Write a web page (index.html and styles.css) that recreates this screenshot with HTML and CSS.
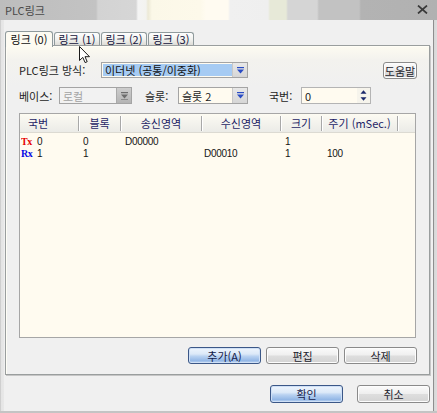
FILE: index.html
```html
<!DOCTYPE html>
<html lang="ko">
<head>
<meta charset="utf-8">
<title>PLC링크</title>
<link rel="stylesheet" href="styles.css">
</head>
<body>
<div class="win">
  <div class="titlebar">
    <span class="title">PLC링크</span>
    <svg class="close" width="11" height="9" viewBox="0 0 11 9"><path d="M1 0.5 L10 8.5 M10 0.5 L1 8.5" stroke="#3a3a3a" stroke-width="1.7" fill="none"/></svg>
  </div>
  <div class="frame">
    <div class="edge-l"></div>
    <div class="client">
      <div class="tabstrip">
        <div class="tab active">링크 (0)</div>
        <div class="tab">링크 (1)</div>
        <div class="tab">링크 (2)</div>
        <div class="tab">링크 (3)</div>
      </div>
      <div class="pane">
        <div class="row row1">
          <span class="lbl lbl-method">PLC링크 방식:</span>
          <div class="combo combo-method">
            <span class="ctext selected">이더넷 (공통/이중화)</span>
            <span class="drop"><svg width="9" height="7" viewBox="0 0 9 7"><rect x="1" y="0" width="7" height="1.2" fill="#2a4cc4"/><path d="M1 2.4h7l-3.5 4z" fill="#2a4cc4"/></svg></span>
          </div>
          <button class="btn help">도움말</button>
        </div>
        <div class="row row2">
          <span class="lbl lbl-base">베이스:</span>
          <div class="combo combo-base disabled">
            <span class="ctext">로컬</span>
            <span class="drop"><svg width="9" height="8" viewBox="0 0 9 8"><rect x="1" y="0" width="7" height="1.2" fill="#6c6c6c"/><path d="M1 2.4h7l-3.5 4z" fill="#6c6c6c"/><rect x="1" y="7" width="7" height="1" fill="#8c8c8c"/></svg></span>
          </div>
          <span class="lbl lbl-slot">슬롯:</span>
          <div class="combo combo-slot">
            <span class="ctext">슬롯 2</span>
            <span class="drop"><svg width="9" height="7" viewBox="0 0 9 7"><rect x="1" y="0" width="7" height="1.2" fill="#2a4cc4"/><path d="M1 2.4h7l-3.5 4z" fill="#2a4cc4"/></svg></span>
          </div>
          <span class="lbl lbl-station">국번:</span>
          <div class="spin">
            <span class="ctext">0</span>
            <span class="spinbtns">
              <span class="sb"><svg width="7" height="4" viewBox="0 0 7 4"><path d="M0.5 3.8h6l-3-3.6z" fill="#1c2a6c"/></svg></span>
              <span class="sb"><svg width="7" height="4" viewBox="0 0 7 4"><path d="M0.5 0.2h6l-3 3.6z" fill="#1c2a6c"/></svg></span>
            </span>
          </div>
        </div>
        <div class="list">
          <div class="lhead">
            <div class="hc h1">국번</div><div class="sep"></div>
            <div class="hc h2">블록</div><div class="sep"></div>
            <div class="hc h3">송신영역</div><div class="sep"></div>
            <div class="hc h4">수신영역</div><div class="sep"></div>
            <div class="hc h5">크기</div><div class="sep"></div>
            <div class="hc h6">주기 (mSec.)</div><div class="sep"></div>
          </div>
          <div class="lbody">
            <div class="lrow">
              <div class="rc r1"><span class="dir tx"><span class="dirtxt">Tx</span></span>0</div>
              <div class="rc r2">0</div>
              <div class="rc r3">D00000</div>
              <div class="rc r4"></div>
              <div class="rc r5">1</div>
              <div class="rc r6"></div>
            </div>
            <div class="lrow">
              <div class="rc r1"><span class="dir rx"><span class="dirtxt">Rx</span></span>1</div>
              <div class="rc r2">1</div>
              <div class="rc r3"></div>
              <div class="rc r4">D00010</div>
              <div class="rc r5">1</div>
              <div class="rc r6">100</div>
            </div>
          </div>
        </div>
        <div class="actions">
          <button class="btn default">추가(A)</button>
          <button class="btn">편집</button>
          <button class="btn">삭제</button>
        </div>
      </div>
      <div class="footer">
        <button class="btn default big">확인</button>
        <button class="btn big">취소</button>
      </div>
    </div>
    <div class="edge-r"></div>
  </div>
  <svg class="cursor" width="12" height="18" viewBox="0 0 12 18"><path d="M0.5 0.5 V14.5 L3.8 11.4 L6.1 16.6 L8.2 15.7 L6 10.7 H10.5 Z" fill="#ffffff" stroke="#1a1a1a" stroke-width="1" stroke-linejoin="miter"/></svg>
</div>
</body>
</html>
```

FILE: styles.css
```css
* { box-sizing: border-box; }
html, body { margin: 0; padding: 0; }
body {
  width: 437px;
  height: 413px;
  overflow: hidden;
  background: #f0f0f0;
  font-family: "Noto Sans CJK KR", "Noto Sans", sans-serif;
  font-size: 11px;
  color: #1c1c1c;
}
.win {
  position: relative;
  width: 437px;
  height: 413px;
  display: flex;
  flex-direction: column;
}
.titlebar {
  flex: none;
  height: 20px;
  display: flex;
  align-items: center;
  justify-content: space-between;
  padding: 0 9px 1px 5px;
  background: linear-gradient(to right,
    #bdbdbd 0px, #c3c3c3 96px, #d3d3d3 98px, #d6d6d6 136px,
    #f4f4f4 138px, #f3f3ef 146px, #ece9d6 148px, #fbf8e8 152px,
    #fdf9ea 200px, #fffbf1 206px, #fffbf1 228px, #f0f0f0 230px,
    #efefef 268px, #e7e9d8 270px, #e7e9d8 286px, #d5d5d5 288px,
    #d5d5d5 317px, #c2c2c2 319px, #c2c2c2 359px, #b3b3b3 361px, #b1b1b1 437px);
}
.title { color: #4a4a4a; line-height: 12px; }
.close { display: block; }
.frame {
  flex: 1;
  display: flex;
  border-bottom: 2px solid #c4c4c4;
}
.edge-l {
  width: 4px;
  flex: none;
  background: linear-gradient(to right, #cfcfcf 0, #cfcfcf 1px, #e4e4e4 1px, #e8e8e8 4px);
}
.edge-r {
  width: 4px;
  flex: none;
  background: linear-gradient(to right, #8e8e8e 0, #8e8e8e 1px, #d6d6d6 1px, #dedede 4px);
}
.client {
  flex: 1;
  display: flex;
  flex-direction: column;
  padding: 11px 3px 0 1px;
}
.tabstrip {
  display: flex;
  align-items: flex-end;
  height: 15px;
  position: relative;
  z-index: 1;
}
.tab {
  height: 13px;
  width: 46px;
  margin-left: 1px;
  margin-bottom: 1px;
  border: 1px solid #8f9a9c;
  border-bottom: none;
  border-radius: 3px 3px 0 0;
  background: linear-gradient(#fefefe, #f1f1ee 55%, #dddcd6);
  text-align: center;
  line-height: 12px;
  color: #14143c;
  white-space: nowrap;
}
.tab.active {
  margin-left: 0;
  width: 48px;
  height: 16px;
  margin-bottom: -1px;
  background: #fdfbf2;
  line-height: 14px;
  color: #111;
}
.pane {
  height: 330px;
  width: 425px;
  margin-top: -1px;
  border: 1px solid #9a9e9e;
  box-shadow: 1px 1px 0 #c6c6c6, inset 1px 1px 0 #fffef6;
  background: linear-gradient(#fdfbf1 0, #f3f2ee 14px, #f0f0f0 40px, #f0f0f0 100%);
  padding: 16px 12px 0 13px;
  display: flex;
  flex-direction: column;
}
.row { display: flex; align-items: center; height: 17px; }
.row2 { margin-top: 8px; }
.row1 { align-items: flex-start; }
.lbl { line-height: 12px; white-space: nowrap; color: #1e1e1e; }
.row1 .lbl { margin-top: 2px; }
.lbl-method { width: 82px; }
.lbl-base { width: 40px; }
.lbl-slot { width: 33px; margin-left: 13px; }
.lbl-station { width: 32px; margin-left: 21px; }
.combo {
  display: flex;
  align-items: stretch;
  border: 1px solid #a4a4a4;
  background: #fffbf0;
  padding: 1px;
}
.combo-method { width: 147px; height: 16px; }
.combo-base { width: 73px; height: 17px; }
.combo-slot { width: 70px; height: 17px; }
.ctext {
  flex: 1;
  min-width: 0;
  line-height: 12px;
  padding-left: 2px;
  white-space: nowrap;
  display: flex;
  align-items: center;
}
.ctext.selected { background: #a6cbf3; color: #111; padding-left: 2px; }
.drop {
  width: 15px;
  flex: none;
  display: flex;
  align-items: center;
  justify-content: center;
  background: linear-gradient(#e8e8e8, #d6d6d6);
  border-left: 1px solid #c8c8c8;
  margin: -1px -1px -1px 0;
}
.disabled { background: #f2f2f2; }
.disabled .ctext { color: #a2a2a2; }
.disabled .drop { background: linear-gradient(#cdcdcd, #b4b4b4); border-left-color: #aaa; }
.spin {
  width: 70px;
  height: 17px;
  display: flex;
  border: 1px solid #b4b4b4;
  background: #fffbf0;
  padding: 0 0 0 1px;
}
.spinbtns { width: 13px; display: flex; flex-direction: column; background: #f6f4ec; }
.sb { flex: 1; display: flex; align-items: center; justify-content: center; }
.btn {
  font-family: inherit;
  font-size: 11px;
  line-height: 12px;
  color: #1c1c2c;
  padding: 0;
  border: 1px solid #8a8a8a;
  border-radius: 3px;
  background: linear-gradient(#fbfbfb 0%, #efefef 48%, #dedede 52%, #d4d4d4 100%);
  box-shadow: inset 0 0 0 1px #fdfdfd;
}
.help { margin-left: auto; width: 34px; height: 17px; }
.btn.default {
  border-color: #3b5787;
  color: #14204a;
  background: linear-gradient(#eef5fd 0%, #dce9f8 40%, #b9d2f1 55%, #93b7e6 85%, #c6daf3 100%);
  box-shadow: inset 0 0 0 1px #cfe0f6;
}
.list {
  margin-top: 9px;
  width: 397px;
  height: 225px;
  border: 1px solid #a6a6a6;
  background: #fffbf0;
  display: flex;
  flex-direction: column;
}
.lhead {
  height: 19px;
  display: flex;
  align-items: center;
  background: linear-gradient(#fdfbf2 0%, #f6f5ef 35%, #ebebe7 100%);
  border-bottom: 1px solid #dcdad2;
  color: #1e1e66;
}
.hc { line-height: 12px; text-align: center; white-space: nowrap; }
.h1 { width: 58px; text-align: left; padding-left: 8px; }
.h2 { width: 41px; }
.h3 { width: 80px; }
.h4 { width: 78px; }
.h5 { width: 40px; }
.h6 { width: 75px; }
.sep { width: 1px; height: 15px; background: #a8a8a8; box-shadow: 1px 0 0 #ffffff; }
.lbody { padding-top: 2px; }
.lrow { display: flex; height: 12px; align-items: center; }
.rc {
  font-family: "Liberation Sans", Arial, sans-serif;
  font-size: 10px;
  line-height: 11px;
  white-space: nowrap;
  letter-spacing: -0.3px;
  color: #151515;
  display: flex;
  align-items: center;
}
.r1 { width: 59px; padding-left: 1px; }
.r2 { width: 42px; padding-left: 4px; }
.r3 { width: 81px; padding-left: 4px; }
.r4 { width: 79px; padding-left: 2px; }
.r5 { width: 41px; padding-left: 4px; }
.r6 { flex: 1; padding-left: 5px; }
.dir { width: 16px; height: 11px; display: inline-block; overflow: visible; }
.dirtxt {
  display: inline-block;
  font-family: "Liberation Serif", "DejaVu Serif", serif;
  font-weight: bold;
  font-size: 10.5px;
  line-height: 11px;
  letter-spacing: -0.5px;
  transform: scaleX(0.95);
  transform-origin: left center;
}
.tx { color: #e60000; }
.rx { color: #0a0ae6; }
.actions {
  margin-top: 9px;
  display: flex;
  justify-content: flex-end;
  gap: 5px;
}
.actions .btn { width: 73px; height: 17px; }
.footer {
  margin-top: 10px;
  display: flex;
  justify-content: flex-end;
  gap: 14px;
}
.btn.big { width: 73px; height: 18px; }
.cursor { position: absolute; left: 79px; top: 46px; }
```
